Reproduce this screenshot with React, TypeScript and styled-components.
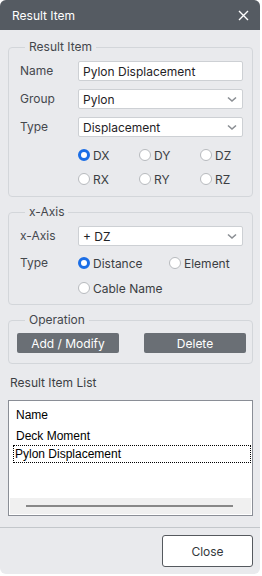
import React from 'react'
import styled, { createGlobalStyle } from 'styled-components'

const GlobalStyle = createGlobalStyle`
  html, body {
    margin: 0;
    padding: 0;
    background: #ffffff;
  }
  * {
    box-sizing: border-box;
  }
`

const Dialog = styled.div`
  width: 260px;
  height: 574px;
  display: flex;
  flex-direction: column;
  background: #e9eaed;
  border-radius: 6px;
  overflow: hidden;
  font-family: Inter, 'Liberation Sans', sans-serif;
  font-size: 12px;
  color: #3a3d42;
`

const TitleBar = styled.div`
  height: 30px;
  flex: none;
  display: flex;
  align-items: center;
  justify-content: space-between;
  padding: 0 11px 0 12px;
  background: #555b62;
  color: #ffffff;
  font-size: 12px;
`

const Body = styled.div`
  flex: 1;
  display: flex;
  flex-direction: column;
  padding: 9px 7px 0 8px;
`

const Group = styled.fieldset<{ $mt?: number; $pt: number; $pb: number }>`
  margin: ${p => p.$mt ?? 0}px 0 0 0;
  padding: ${p => p.$pt}px 9px ${p => p.$pb}px 11px;
  border: 1px solid #d3d6da;
  border-radius: 4px;
  min-width: 0;
`

const Legend = styled.legend`
  margin-left: 5px;
  padding: 0 4px;
  font-size: 12px;
  line-height: 16px;
  color: #44474c;
`

const Stack = styled.div<{ $gap: number }>`
  display: flex;
  flex-direction: column;
  gap: ${p => p.$gap}px;
`

const FormRow = styled.div`
  display: grid;
  grid-template-columns: 58px 1fr;
  align-items: center;
  min-height: 20px;
`

const Label = styled.span<{ $top?: boolean }>`
  color: #45484d;
  align-self: ${p => (p.$top ? 'start' : 'center')};
  line-height: 20px;
`

const Field = styled.div`
  position: relative;
  height: 20px;
  display: flex;
  align-items: center;
  padding: 0 4px;
  background: #ffffff;
  border: 1px solid #cdd0d4;
  border-radius: 2px;
  color: #1f2226;
  font-size: 12px;
`

const Chevron = styled.svg`
  position: absolute;
  right: 5px;
  top: 6px;
`

const RadioGrid = styled.div<{ $cols: string; $gap: number }>`
  display: grid;
  grid-template-columns: ${p => p.$cols};
  row-gap: ${p => p.$gap}px;
`

const RadioItem = styled.label`
  display: flex;
  align-items: center;
  gap: 3px;
  height: 20px;
  color: #3b3e43;
  font-size: 12px;
`

const RadioDot = styled.span<{ $on?: boolean }>`
  width: 12px;
  height: 12px;
  border-radius: 50%;
  flex: none;
  background: #ffffff;
  border: ${p => (p.$on ? '3.5px solid #1b6ee6' : '1px solid #b7babe')};
`

const Buttons = styled.div`
  display: grid;
  grid-template-columns: 102px 102px;
  justify-content: space-between;
  margin: 0 -3px 0 -3px;
`

const DarkButton = styled.button`
  height: 20px;
  border: none;
  border-radius: 2px;
  background: #6a6f75;
  color: #ffffff;
  font-family: Inter, 'Liberation Sans', sans-serif;
  font-size: 12px;
  padding: 0;
`

const ListTitle = styled.div`
  margin: 11px 0 0 2px;
  line-height: 16px;
  color: #3c3f44;
`

const ListBox = styled.div`
  margin-top: 9px;
  width: 245px;
  height: 116px;
  display: flex;
  flex-direction: column;
  background: #ffffff;
  border: 1px solid #8a8e96;
  padding: 1px;
  font-family: 'Liberation Sans', Arial, sans-serif;
  font-size: 12px;
  color: #000000;
`

const ListItems = styled.div`
  flex: 1;
  padding: 4px 0 0 5px;
`

const ListItem = styled.div<{ $focus?: boolean; $gap?: number }>`
  height: 18px;
  line-height: 16px;
  padding-left: ${p => (p.$focus ? 1 : 0)}px;
  margin-left: ${p => (p.$focus ? -2 : 0)}px;
  margin-top: ${p => p.$gap ?? 0}px;
  border: 1px dotted ${p => (p.$focus ? '#000000' : 'transparent')};
`

const ScrollBar = styled.div`
  height: 16px;
  flex: none;
  display: flex;
  align-items: center;
  padding: 0 18px 0 16px;
  background: #f0f0f0;
`

const ScrollThumb = styled.div`
  flex: 1;
  height: 2px;
  background: #888888;
`

const Footer = styled.div`
  flex: none;
  display: flex;
  justify-content: flex-end;
  padding: 7px 7px 0 0;
  height: 47px;
  border-top: 1px solid #c3c7cb;
`

const CloseButton = styled.button`
  width: 91px;
  height: 32px;
  background: #ffffff;
  border: 1px solid #55595e;
  border-radius: 3px;
  font-family: Inter, 'Liberation Sans', sans-serif;
  font-size: 12px;
  color: #34373c;
`

function Select({ value }: { value: string }) {
  return (
    <Field>
      {value}
      <Chevron width="10" height="7" viewBox="0 0 10 7">
        <path d="M1 1.5 L5 5 L9 1.5" fill="none" stroke="#8a8e93" strokeWidth="1.6" />
      </Chevron>
    </Field>
  )
}

function Radio({ label, on }: { label: string; on?: boolean }) {
  return (
    <RadioItem>
      <RadioDot $on={on} />
      {label}
    </RadioItem>
  )
}

export default function App() {
  return (
    <>
      <GlobalStyle />
      <Dialog>
        <TitleBar>
          Result Item
          <svg width="11" height="11" viewBox="0 0 11 11">
            <path d="M1 1 L10 10 M10 1 L1 10" stroke="#ffffff" strokeWidth="1.4" />
          </svg>
        </TitleBar>
        <Body>
          <Group $pt={6} $pb={7}>
            <Legend>Result Item</Legend>
            <Stack $gap={8}>
              <FormRow>
                <Label>Name</Label>
                <Field>Pylon Displacement</Field>
              </FormRow>
              <FormRow>
                <Label>Group</Label>
                <Select value="Pylon" />
              </FormRow>
              <FormRow>
                <Label>Type</Label>
                <Select value="Displacement" />
              </FormRow>
              <FormRow>
                <span />
                <RadioGrid $cols="61px 61px 1fr" $gap={4}>
                  <Radio label="DX" on />
                  <Radio label="DY" />
                  <Radio label="DZ" />
                  <Radio label="RX" />
                  <Radio label="RY" />
                  <Radio label="RZ" />
                </RadioGrid>
              </FormRow>
            </Stack>
          </Group>

          <Group $mt={7} $pt={6} $pb={6}>
            <Legend>x-Axis</Legend>
            <Stack $gap={7}>
              <FormRow>
                <Label>x-Axis</Label>
                <Select value="+ DZ" />
              </FormRow>
              <FormRow>
                <Label $top>Type</Label>
                <RadioGrid $cols="91px 1fr" $gap={5}>
                  <Radio label="Distance" on />
                  <Radio label="Element" />
                  <Radio label="Cable Name" />
                </RadioGrid>
              </FormRow>
            </Stack>
          </Group>

          <Group $mt={7} $pt={5} $pb={10}>
            <Legend>Operation</Legend>
            <Buttons>
              <DarkButton>Add / Modify</DarkButton>
              <DarkButton>Delete</DarkButton>
            </Buttons>
          </Group>

          <ListTitle>Result Item List</ListTitle>
          <ListBox>
            <ListItems>
              <ListItem>Name</ListItem>
              <ListItem $gap={3}>Deck Moment</ListItem>
              <ListItem $focus>Pylon Displacement</ListItem>
            </ListItems>
            <ScrollBar>
              <ScrollThumb />
            </ScrollBar>
          </ListBox>
        </Body>
        <Footer>
          <CloseButton>Close</CloseButton>
        </Footer>
      </Dialog>
    </>
  )
}
